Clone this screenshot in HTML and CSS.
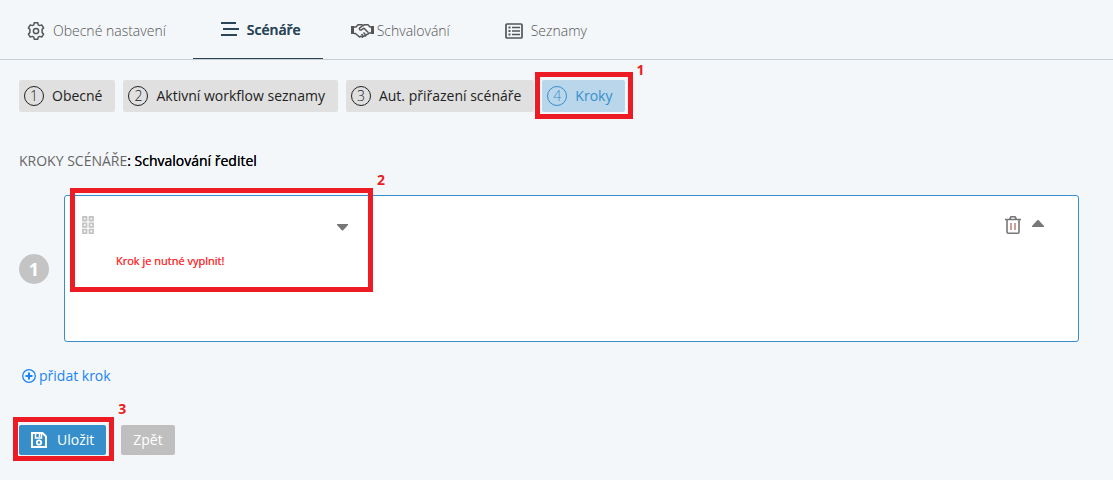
FILE: index.html
```
<!DOCTYPE html>
<html lang="cs">
<head>
    <meta charset="UTF-8">
    <meta name="viewport" content="width=device-width, initial-scale=1.0">
    <title>Scénáře - Kroky</title>
    <link rel="stylesheet" href="styles.css">
</head>
<body>
    <nav class="tabs">
        <a class="tab" href="#obecne-nastaveni">
            <span class="tab-icon">
                <svg width="18" height="18" viewBox="0 0 18 18" fill="none" stroke="currentColor" stroke-width="1.5" stroke-linejoin="round">
                    <path d="M7.200.8h3.600l.4 2 1.500.8 2-.7 1.900 3.100-1.500 1.400v3.200l1.500 1.400-1.900 3.100-2-.7-1.500.8-.4 2H7.200l-.4-2-1.500-.8-2 .7L1.400 12l1.500-1.400V7.400L1.400 6l1.900-3.100 2 .7 1.500-.8z"/>
                    <circle cx="9" cy="9" r="2.600"/>
                </svg>
            </span>
            <span>Obecné nastavení</span>
        </a>
        <a class="tab active" href="#scenare">
            <span class="tab-icon">
                <svg width="18" height="18" viewBox="0 0 18 18" fill="none" stroke="currentColor" stroke-width="2">
                    <path d="M0 2h15M2 8h16M0 14h16"/>
                </svg>
            </span>
            <span>Scénáře</span>
        </a>
        <a class="tab" href="#schvalovani">
            <span class="tab-icon">
                <svg width="23" height="16" viewBox="0 0 23 16" fill="none" stroke="currentColor" stroke-width="1.5" stroke-linejoin="round">
                    <path d="M0 3h3v8H0zM20 3h3v8h-3z" fill="currentColor" stroke="none"/>
                    <path d="M3 4h2l2-2.200h4l1 .7 1.500-.7H17L19 4h1.500M3 10.500h1.500l4 3.500 1.500-.8 1.500 1 1.500-1.400 1.500.2 1-1.600 1.500-.2.600-1.200h2.500"/>
                    <path d="M12 2.500 8.500 5.200c-.8 1.100.8 2.500 2.300 1.500L13 5.200l4.200 4.300M12.500 9.500l2 2.200M10.500 11l1.500 1.700"/>
                </svg>
            </span>
            <span>Schvalování</span>
        </a>
        <a class="tab" href="#seznamy">
            <span class="tab-icon">
                <svg width="18" height="16" viewBox="0 0 18 16" fill="none" stroke="currentColor">
                    <rect x="1" y="1" width="16" height="14" rx="1" stroke-width="1.700"/>
                    <path d="M3.500 4.500h2M3.500 8h2M3.500 11.500h2" stroke-width="2"/>
                    <path d="M7 4.500h8M7 8h8M7 11.500h8" stroke-width="1.600"/>
                </svg>
            </span>
            <span>Seznamy</span>
        </a>
    </nav>

    <main class="content">
        <div class="steps">
            <button type="button" class="step"><span class="step-number">1</span>Obecné</button>
            <button type="button" class="step"><span class="step-number">2</span>Aktivní workflow seznamy</button>
            <button type="button" class="step"><span class="step-number">3</span>Aut. přiřazení scénáře</button>
            <div class="marked">
                <button type="button" class="step current"><span class="step-number">4</span>Kroky</button>
                <span class="marker marker-step"><span class="marker-label">1</span></span>
            </div>
        </div>

        <h1 class="title"><span class="title-label">KROKY SCÉNÁŘE</span>: Schvalování ředitel</h1>

        <div class="row">
            <span class="row-number">1</span>
            <section class="card">
                <button type="button" class="icon-button grip" aria-label="Přesunout krok">
                    <svg width="12" height="18" viewBox="0 0 12 18" fill="none" stroke="currentColor" stroke-width="1.800">
                        <path d="M1 1h3.500v3.500H1zM7.500 1H11v3.500H7.500zM1 7.300h3.500v3.500H1zM7.500 7.300H11v3.500H7.500zM1 13.600h3.500v3.500H1zM7.500 13.600H11v3.500H7.500z"/>
                    </svg>
                </button>
                <div class="field">
                    <div class="select-wrap">
                        <select class="select" id="krok" aria-label="Krok">
                            <option value=""></option>
                        </select>
                        <svg class="select-arrow" width="11" height="7" viewBox="0 0 11 7" fill="currentColor"><path d="M0 0h11v1L6 6.500H5L0 1z"/></svg>
                    </div>
                    <label class="error" for="krok">Krok je nutné vyplnit!</label>
                </div>
                <div class="card-actions">
                    <button type="button" class="icon-button" aria-label="Smazat krok">
                        <svg width="16" height="18" viewBox="0 0 16 18" fill="none" stroke="currentColor" stroke-width="1.600">
                            <path d="M0 3.500h16M2 3.500V16q0 1.200 1.200 1.200h9.600q1.200 0 1.200-1.200V3.500M4.500 3.500 6 .8h4l1.500 2.700"/>
                            <path class="trash-lines" d="M6 7v7M10 7v7"/>
                        </svg>
                    </button>
                    <button type="button" class="icon-button collapse" aria-label="Sbalit">
                        <svg width="12" height="7" viewBox="0 0 12 7" fill="currentColor"><path d="M5.500 0h1L12 6v1H0V6z"/></svg>
                    </button>
                </div>
                <span class="marker marker-field"><span class="marker-label">2</span></span>
            </section>
        </div>

        <a class="add" href="#pridat">
            <svg width="14" height="14" viewBox="0 0 14 14" fill="none" stroke="currentColor">
                <circle cx="7" cy="7" r="6.300" stroke-width="1.300"/>
                <path d="M7 3.500v7M3.500 7h7" stroke-width="2"/>
            </svg>
            přidat krok
        </a>

        <div class="buttons">
            <div class="marked">
                <button type="submit" class="button save">
                    <svg width="16" height="16" viewBox="0 0 16 16" fill="none" stroke="currentColor" stroke-width="2">
                        <path d="M1 1h10.500L15 4.500V15H1z"/>
                        <path d="M4.500 1v5h6V1" stroke-width="1.500"/>
                        <path d="M8.500 1v4" stroke-width="1.500"/>
                        <circle cx="8" cy="10.500" r="2.200" stroke-width="1.800"/>
                    </svg>
                    Uložit
                </button>
                <span class="marker marker-save"><span class="marker-label">3</span></span>
            </div>
            <button type="button" class="button back">Zpět</button>
        </div>
    </main>
</body>
</html>
```
FILE: styles.css
```
* {
    box-sizing: border-box;
}

body {
    margin: 0;
    background-color: #f3f7fa;
    color: #222;
    font-family: 'Open Sans', sans-serif;
    font-size: 14px;
    line-height: 20px;
}

svg {
    display: block;
    flex: none;
}

button {
    font: inherit;
    border: none;
    cursor: pointer;
}

.tabs {
    display: flex;
    height: 60px;
    border-bottom: 1px solid #c8d0d6;
}

.tab {
    display: flex;
    align-items: center;
    padding: 2px 27px 0 28px;
    color: #555;
    font-weight: 300;
    text-decoration: none;
}

.tab:first-child {
    padding-left: 27px;
}

.tab.active {
    padding-right: 22px;
    border-bottom: 1px solid #2a4557;
    color: #2a4557;
    font-weight: 600;
    text-shadow: 0 0 0 #2a4557;
}

.tab-icon {
    width: 26px;
}

.content {
    padding: 20px 34px 20px 19px;
}

.steps {
    display: flex;
    gap: 8px;
}

.step {
    display: flex;
    align-items: center;
    gap: 8px;
    height: 32px;
    padding: 0 13px 0 5px;
    border-radius: 2px;
    background-color: #e0e0e0;
    color: #222;
    white-space: nowrap;
}

.step-number {
    width: 20px;
    height: 20px;
    border: 1px solid #222;
    border-radius: 50%;
    font-weight: 300;
    line-height: 18px;
    text-align: center;
}

.step.current {
    background-color: #b9d6eb;
    color: #368fcb;
}

.step.current .step-number {
    border-color: #368fcb;
}

.title {
    margin: 39px 0 24px;
    color: #000;
    font-size: 14px;
    font-weight: 400;
    line-height: 20px;
    text-shadow: 0 0 0 #000;
}

.title-label {
    color: #666;
    text-shadow: none;
}

.row {
    display: flex;
    align-items: center;
    gap: 15px;
}

.row-number {
    flex: none;
    width: 30px;
    height: 30px;
    border-radius: 50%;
    background-color: #c4c4c4;
    color: #fff;
    font-size: 18px;
    font-weight: 700;
    line-height: 30px;
    text-align: center;
}

.card {
    position: relative;
    display: flex;
    align-items: flex-start;
    flex: 1;
    min-height: 147px;
    padding: 20px 34px 20px 17px;
    border: 1px solid #368fcb;
    border-radius: 3px;
    background-color: #fff;
}

.icon-button {
    padding: 0;
    background: none;
    color: #777;
}

.grip {
    margin-right: 22px;
    color: #c4c4c4;
}

.field {
    width: 236px;
}

.select-wrap {
    display: grid;
    align-items: center;
}

.select,
.select-arrow {
    grid-area: 1 / 1;
}

.select {
    appearance: none;
    width: 100%;
    height: 22px;
    border: none;
    background: none;
    font: inherit;
}

.select-arrow {
    justify-self: end;
    margin-right: 4px;
    color: #777;
    pointer-events: none;
}

.error {
    display: block;
    margin-top: 13px;
    color: #f33;
    font-size: 11px;
    text-shadow: 0 0 0 #f33;
}

.card-actions {
    display: flex;
    align-items: center;
    gap: 11px;
    margin-left: auto;
}

.collapse {
    padding-bottom: 3px;
}

.trash-lines {
    stroke: #c08a80;
}

.add {
    display: flex;
    align-items: center;
    gap: 3px;
    width: fit-content;
    margin: 24px 0 0 3px;
    color: #1a84f5;
    text-decoration: none;
}

.buttons {
    display: flex;
    gap: 15px;
    margin-top: 39px;
}

.button {
    display: flex;
    align-items: center;
    gap: 10px;
    height: 30px;
    padding: 0 12px;
    border-radius: 2px;
    color: #fff;
}

.save {
    background-color: #368fcb;
}

.back {
    background-color: #bfbfbf;
}

/* red frames with a number, drawn over the controls */
.marked {
    position: relative;
}

.marker {
    position: absolute;
    border: 5px solid #ed1c24;
    pointer-events: none;
}

.marker-step {
    inset: -8px -8px -7px -7px;
}

.marker-field {
    top: -8px;
    left: 5px;
    width: 303px;
    height: 104px;
}

.marker-save {
    inset: -8px -8px -6px -6px;
}

.marker-label {
    position: absolute;
    left: 100%;
    top: -23px;
    margin-left: 9px;
    color: #ed1c24;
    font-size: 14px;
    font-weight: 700;
}

.marker-step .marker-label {
    top: -17px;
    margin-left: 8px;
}
```
